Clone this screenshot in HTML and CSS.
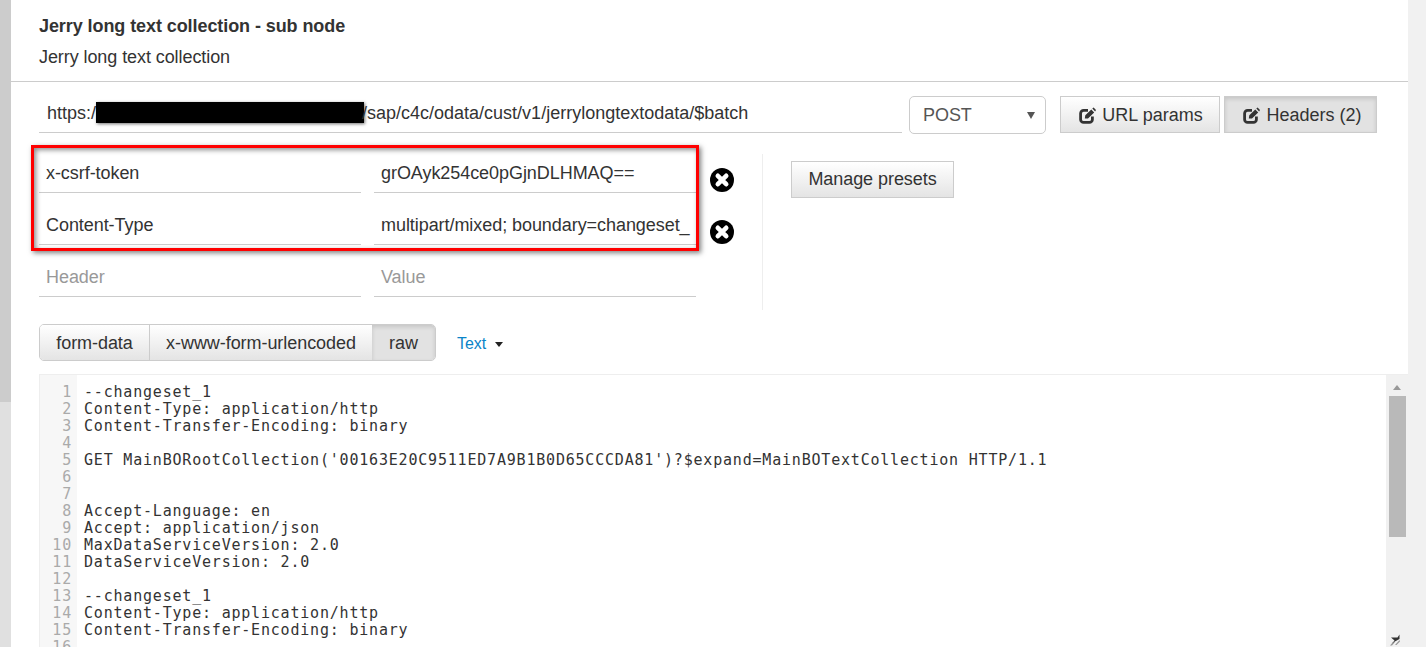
FILE: index.html
```html
<!DOCTYPE html>
<html lang="en">
<head>
<meta charset="utf-8">
<title>Jerry long text collection</title>
<link rel="stylesheet" href="styles.css">
</head>
<body>
<div class="page">
  <div class="side"><div class="side-thumb"></div></div>
  <main class="main">
    <header class="head">
      <div class="title">Jerry long text collection - sub node</div>
      <div class="subtitle">Jerry long text collection</div>
    </header>
    <section class="url-row">
      <div class="url-field">https:/<span class="redact"></span>/sap/c4c/odata/cust/v1/jerrylongtextodata/$batch</div>
      <div class="select"><span>POST</span><span class="select-arrow"></span></div>
      <div class="btn btn-url"><svg class="edit" viewBox="0 0 18 17"><path d="M9 3.400H4.600A3 3 0 0 0 1.600 6.400V12.400A3 3 0 0 0 4.600 15.400H10.400A3 3 0 0 0 13.400 12.400V9.500" fill="none" stroke="#333" stroke-width="2.8"/><path d="M5.800 11.400 6.300 8.300 12.300 2.600 15.200 5.500 9 11.400zM13.300 1.600 14.600 .6 17 3 16.100 4.400z" fill="#333"/></svg><span class="label">URL params</span></div>
      <div class="btn btn-active btn-head"><svg class="edit" viewBox="0 0 18 17"><path d="M9 3.400H4.600A3 3 0 0 0 1.600 6.400V12.400A3 3 0 0 0 4.600 15.400H10.400A3 3 0 0 0 13.400 12.400V9.500" fill="none" stroke="#333" stroke-width="2.8"/><path d="M5.800 11.400 6.300 8.300 12.300 2.600 15.200 5.500 9 11.400zM13.300 1.600 14.600 .6 17 3 16.100 4.400z" fill="#333"/></svg><span class="label">Headers (2)</span></div>
    </section>
    <section class="headers">
      <div class="header-rows">
        <div class="marked"></div>
        <div class="hrow">
          <div class="hfield hkey">x-csrf-token</div>
          <div class="hfield hval">grOAyk254ce0pGjnDLHMAQ==</div>
          <svg class="del" viewBox="0 0 24 24"><circle cx="12" cy="12" r="12" fill="#000"/><path d="M7.800 7.800 16.200 16.200M16.200 7.800 7.800 16.200" stroke="#fff" stroke-width="4.600" stroke-linecap="round"/></svg>
        </div>
        <div class="hrow">
          <div class="hfield hkey">Content-Type</div>
          <div class="hfield hval">multipart/mixed; boundary=changeset_</div>
          <svg class="del" viewBox="0 0 24 24"><circle cx="12" cy="12" r="12" fill="#000"/><path d="M7.800 7.800 16.200 16.200M16.200 7.800 7.800 16.200" stroke="#fff" stroke-width="4.600" stroke-linecap="round"/></svg>
        </div>
        <div class="hrow">
          <div class="hfield hkey ph">Header</div>
          <div class="hfield hval ph">Value</div>
        </div>
      </div>
      <div class="presets"><div class="btn btn-presets">Manage presets</div></div>
    </section>
    <section class="body-tabs">
      <div class="tabs">
        <div class="tab t1">form-data</div>
        <div class="tab t2">x-www-form-urlencoded</div>
        <div class="tab t3 tab-active">raw</div>
      </div>
      <div class="mode">Text<span class="caret"></span></div>
    </section>
    <section class="editor">
      <div class="gutter">1
2
3
4
5
6
7
8
9
10
11
12
13
14
15
16</div>
      <div class="code">--changeset_1
Content-Type: application/http
Content-Transfer-Encoding: binary

GET MainBORootCollection('00163E20C9511ED7A9B1B0D65CCCDA81')?$expand=MainBOTextCollection HTTP/1.1


Accept-Language: en
Accept: application/json
MaxDataServiceVersion: 2.0
DataServiceVersion: 2.0

--changeset_1
Content-Type: application/http
Content-Transfer-Encoding: binary
</div>
      <div class="vbar">
        <div class="vbar-up"></div>
        <div class="vbar-thumb"></div>
        <svg class="grip" viewBox="0 0 12 13"><path d="M1 12.500 4 9H6L3 12.500zM6 12 10.500 7 11 8.500 7.500 12z" fill="#999"/><path d="M2 4.500H8.500L10.500 1.500 10.500 6 5 9 3 10.500 5.500 7.500z" fill="#333"/></svg>
      </div>
    </section>
  </main>
  <div class="rail"></div>
</div>
</body>
</html>
```
FILE: styles.css
```css
html, body { margin: 0; padding: 0; height: 647px; overflow: hidden; background: #fff; }
body { font-family: "Liberation Sans", Arial, sans-serif; font-size: 18px; color: #333; letter-spacing: -.06px; }
.page { display: flex; width: 1426px; height: 647px; overflow: hidden; }
.side { width: 11px; flex: none; background: #e0e0e0; }
.side-thumb { height: 402px; background: #ccc; }
.rail { width: 18px; flex: none; background: #f1f1f1; }
.main { width: 1397px; flex: none; display: flex; flex-direction: column; }

.head { height: 81px; border-bottom: 1px solid #ccc; padding-left: 28px; }
.title { font-weight: bold; font-size: 18px; line-height: 20px; padding-top: 16px; letter-spacing: -.08px; }
.subtitle { font-size: 18px; line-height: 20px; padding-top: 11px; letter-spacing: -.08px; }

.url-row { display: flex; align-items: flex-start; padding: 14px 0 0 28px; height: 57px; box-sizing: border-box; }
.url-field { width: 855px; height: 36px; line-height: 35px; padding-left: 8px; border-bottom: 1px solid #ccc; white-space: nowrap; letter-spacing: 0; }
.redact { display: inline-block; width: 268px; height: 21px; margin-right: -2px; vertical-align: -4px; background: #000; box-shadow: 1px 1px 3px rgba(0,0,0,.55); }
.select { margin-left: 7px; width: 137px; height: 38px; box-sizing: border-box; border: 1px solid #ccc; border-radius: 5px; padding: 0 13px; display: flex; align-items: center; justify-content: space-between; color: #555; }
.select-arrow { width: 0; height: 0; border-left: 4px solid transparent; border-right: 4px solid transparent; border-top: 7px solid #555; margin-right: -3px; }
.btn { height: 37px; box-sizing: border-box; border: 1px solid #ccc; background: linear-gradient(#fff, #e4e4e4); display: flex; align-items: center; justify-content: center; color: #333; }
.btn-url { margin-left: 14px; width: 160px; padding-left: 2px; }
.btn-head { margin-left: 4px; width: 153px; padding-left: 4px; }
.btn-active { background: #e2e2e2; box-shadow: inset 0 2px 4px rgba(0,0,0,.13); }
.label { padding-top: 1px; letter-spacing: 0; }
.edit { width: 18px; height: 17px; margin-right: 5px; margin-top: 2px; flex: none; }

.headers { display: flex; align-items: flex-start; height: 185px; box-sizing: border-box; padding: 15px 0 0 28px; }
.header-rows { position: relative; width: 724px; height: 156px; box-sizing: border-box; padding-top: 1px; flex: none; border-right: 1px solid #eee; margin-right: 28px; }
.hrow { display: flex; height: 52px; align-items: flex-start; }
.hfield { height: 38px; line-height: 37px; box-sizing: border-box; border-bottom: 1px solid #ccc; padding-left: 7px; }
.hkey { width: 322px; margin-right: 13px; }
.hval { width: 322px; white-space: nowrap; overflow: hidden; }
.ph { color: #999; }
.del { width: 24px; height: 24px; margin: 13px 0 0 14px; flex: none; }
.marked { position: absolute; left: -8px; top: -9px; width: 668px; height: 106px; box-sizing: border-box; border: 3px solid #f00; box-shadow: 2px 2px 5px rgba(0,0,0,.5), inset 2px 2px 5px rgba(0,0,0,.45); pointer-events: none; }
.presets { padding-top: 7px; }
.btn-presets { width: 163px; }

.body-tabs { display: flex; align-items: center; height: 37px; padding-left: 28px; flex: none; }
.tabs { display: flex; height: 37px; width: 397px; box-sizing: border-box; border: 1px solid #ccc; border-radius: 5px; overflow: hidden; }
.tab { display: flex; align-items: center; justify-content: center; padding-top: 1px; box-sizing: border-box; background: linear-gradient(#fff, #e4e4e4); }
.t1 { width: 110px; border-right: 1px solid #ccc; }
.t2 { width: 222px; }
.t3 { flex: 1; }
.tab-active { background: #e2e2e2; box-shadow: inset 0 2px 4px rgba(0,0,0,.13); }
.mode { margin-left: 21px; padding-top: 3px; font-size: 16px; color: #0a84c8; display: flex; align-items: center; }
.caret { width: 0; height: 0; margin-left: 9px; border-left: 4.500px solid transparent; border-right: 4.500px solid transparent; border-top: 5px solid #222; }

.editor { margin: 13px 0 0 28px; flex: 1; display: flex; border-top: 1px solid #eee; overflow: hidden; font-family: "DejaVu Sans Mono", monospace; font-size: 15px; line-height: 17px; }
.gutter { width: 38px; flex: none; box-sizing: border-box; background: #f7f7f7; border-left: 1px solid #eee; color: #aaa; text-align: right; padding: 9px 5px 0 0; white-space: pre; letter-spacing: .8px; }
.code { flex: 1; padding: 9px 0 0 7px; white-space: pre; letter-spacing: .8px; color: #333; }
.vbar { width: 22px; flex: none; background: #f1f1f1; display: flex; flex-direction: column; align-items: center; position: relative; }
.vbar-up { width: 0; height: 0; margin-top: 10px; border-left: 4.500px solid transparent; border-right: 4.500px solid transparent; border-bottom: 5px solid #999; }
.vbar-thumb { width: 17px; height: 141px; margin-top: 6px; background: #b9b9b9; }
.grip { position: absolute; right: 7px; bottom: 1px; width: 12px; height: 13px; }
```
